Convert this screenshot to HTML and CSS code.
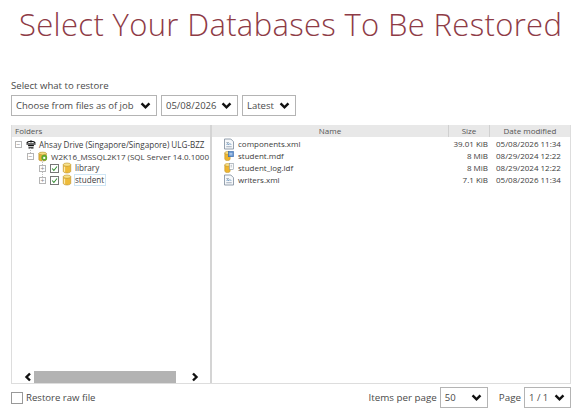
FILE: index.html
```html
<!DOCTYPE html>
<html lang="en">
<head>
  <meta charset="UTF-8" />
  <meta name="viewport" content="width=device-width, initial-scale=1" />
  <title>Select Your Databases To Be Restored</title>
  <link rel="stylesheet" href="styles.css">
</head>
<body>
  <svg class="defs" width="0" height="0">
    <defs>
      <symbol id="chev" viewBox="0 0 12 8"><path d="M1.500 1.500 6 6l4.500-4.500" fill="none" stroke="#111" stroke-width="2.800"/></symbol>
      <symbol id="db" viewBox="0 0 12 13">
        <path d="M1.500 2.500v8c0 1 2 2 4.500 2s4.500-1 4.500-2v-8z" fill="#eebb3a" stroke="#b98d22" stroke-width=".7"/>
        <ellipse cx="6" cy="2.500" rx="4.500" ry="2" fill="#f8e28c" stroke="#b98d22" stroke-width=".7"/>
        <path d="M3 5v6" stroke="#fbeab0" stroke-width="1.400"/>
      </symbol>
      <symbol id="xml" viewBox="0 0 11 12">
        <path d="M.5.500h7l3 3v8H.5z" fill="#f6f8fa" stroke="#8794a3"/>
        <path d="M2.500 4.500h3M2.500 9h6" stroke="#9aa7b4"/>
        <path d="M3 7l1-1.500L5 7l1.500-1.500L8 7" fill="none" stroke="#4c7fb0" stroke-width=".8"/>
      </symbol>
      <symbol id="dbfile" viewBox="0 0 13 13">
        <path d="M1 2.500v8c0 1 1.500 2 3.500 2s3.500-1 3.500-2v-8z" fill="#eeb52f" stroke="#b98d22" stroke-width=".7"/>
        <ellipse cx="4.500" cy="2.500" rx="3.500" ry="1.800" fill="#f8e28c" stroke="#b98d22" stroke-width=".7"/>
      </symbol>
    </defs>
  </svg>

  <h1 class="title">Select Your Databases To Be Restored</h1>

  <div class="label">Select what to restore</div>
  <div class="filters">
    <div class="dropdown job">Choose from files as of job <svg class="chev"><use href="#chev"/></svg></div>
    <div class="dropdown date">05/08/2026 <svg class="chev"><use href="#chev"/></svg></div>
    <div class="dropdown latest">Latest <svg class="chev"><use href="#chev"/></svg></div>
  </div>

  <div class="browser">
    <div class="tree-pane">
      <div class="head folders-head">Folders</div>
      <div class="tree">
        <div class="node">
          <span class="toggle">&minus;</span>
          <svg class="ico" viewBox="0 0 12 12"><path d="M1 5c1-3 9-3 10 0" fill="#fff" stroke="#111" stroke-width="1.300"/><path d="M.5 6h11" stroke="#111" stroke-width="1.500"/><path d="M2.500 8h7M3 10.500h6" stroke="#111" stroke-width="1.500"/><circle cx="6" cy="3" r="1.300" fill="#111"/></svg>
          <span>Ahsay Drive (Singapore/Singapore) ULG-BZZ</span>
        </div>
        <div class="node lvl1">
          <span class="toggle">&minus;</span>
          <svg class="ico" viewBox="0 0 12 12"><path d="M1 3v7.500c0 .8 2 1.500 4.500 1.500s4.500-.7 4.500-1.500V3z" fill="#e5b437" stroke="#a9821f" stroke-width=".6"/><ellipse cx="5.500" cy="3" rx="4.500" ry="1.700" fill="#f3dc80" stroke="#a9821f" stroke-width=".6"/><circle cx="7.500" cy="8" r="3.500" fill="#5fa82e"/><path d="M6.300 7v2.500h2.400V7z" fill="#fff"/></svg>
          <span class="instance">W2K16_MSSQL2K17 (SQL Server 14.0.1000</span>
        </div>
        <div class="node lvl2">
          <span class="toggle">+</span>
          <span class="check"><svg viewBox="0 0 9 9"><path d="M1.500 4.500 3.700 7l4-5" fill="none" stroke="#2e8b2e" stroke-width="1.300"/></svg></span>
          <svg class="ico"><use href="#db"/></svg>
          <span class="leaf">library</span>
        </div>
        <div class="node lvl2">
          <span class="toggle">+</span>
          <span class="check"><svg viewBox="0 0 9 9"><path d="M1.500 4.500 3.700 7l4-5" fill="none" stroke="#2e8b2e" stroke-width="1.300"/></svg></span>
          <svg class="ico"><use href="#db"/></svg>
          <span class="leaf selected">student</span>
        </div>
      </div>
      <div class="hscroll">
        <svg class="arrow" viewBox="0 0 8 10"><path d="M6 1.500 2.500 5 6 8.500" fill="none" stroke="#111" stroke-width="2.400"/></svg>
        <div class="thumb"></div>
        <svg class="arrow" viewBox="0 0 8 10"><path d="M2 1.500 5.500 5 2 8.500" fill="none" stroke="#111" stroke-width="2.400"/></svg>
      </div>
    </div>

    <div class="file-pane">
      <div class="file-row head">
        <span class="col-name centered">Name</span>
        <span class="col-size centered">Size</span>
        <span class="col-date centered">Date modified</span>
      </div>
      <div class="file-row">
        <span class="col-name"><svg class="file-ico"><use href="#xml"/></svg>components.xml</span>
        <span class="col-size">39.01 KiB</span>
        <span class="col-date">05/08/2026 11:34</span>
      </div>
      <div class="file-row">
        <span class="col-name"><svg class="file-ico" viewBox="0 0 13 13"><use href="#dbfile"/><rect x="5.500" y=".5" width="7" height="7" fill="#5c8fd0" stroke="#2f5f9f" stroke-width=".6"/><path d="M7 3h4M7 5h4" stroke="#fff" stroke-width=".8"/></svg>student.mdf</span>
        <span class="col-size">8 MiB</span>
        <span class="col-date">08/29/2024 12:22</span>
      </div>
      <div class="file-row">
        <span class="col-name"><svg class="file-ico" viewBox="0 0 13 13"><use href="#dbfile"/><rect x="7" y=".5" width="5" height="8" fill="#fff" stroke="#7a8794" stroke-width=".7"/><path d="M8.500 3h2M8.500 5h2" stroke="#7a8794" stroke-width=".7"/></svg>student_log.ldf</span>
        <span class="col-size">8 MiB</span>
        <span class="col-date">08/29/2024 12:22</span>
      </div>
      <div class="file-row">
        <span class="col-name"><svg class="file-ico"><use href="#xml"/></svg>writers.xml</span>
        <span class="col-size">7.1 KiB</span>
        <span class="col-date">05/08/2026 11:34</span>
      </div>
    </div>
  </div>

  <div class="footer">
    <label class="raw"><span class="box"></span>Restore raw file</label>
    <div class="pager">
      <span class="pager-label">Items per page</span>
      <div class="dropdown small per-page">50 <svg class="chev"><use href="#chev"/></svg></div>
      <span class="pager-label page-label">Page</span>
      <div class="dropdown small page">1 / 1 <svg class="chev"><use href="#chev"/></svg></div>
    </div>
  </div>
</body>
</html>
```

FILE: styles.css
```css
* {
  box-sizing: border-box;
}
body {
  font-family: 'Open Sans', sans-serif;
  background: #fff;
  margin: 0;
  padding: 0 9px 0 11px;
  color: #4a4a4a;
  overflow: hidden;
}
.defs {
  position: absolute;
}
.title {
  color: #8e3b46;
  font-size: 31px;
  font-weight: 300;
  letter-spacing: 0.34px;
  line-height: 44px;
  margin: 2px 0 0 8px;
  white-space: nowrap;
}
.label {
  font-size: 9.600px;
  line-height: 14px;
  margin-top: 33px;
}
.filters {
  display: flex;
  gap: 4px;
  margin-top: 2px;
}
.dropdown {
  display: flex;
  align-items: center;
  justify-content: space-between;
  height: 21px;
  padding: 0 5px 0 4px;
  border: 1px solid #b4b4b4;
  background: #fff;
  font-size: 9.500px;
  white-space: nowrap;
}
.chev {
  width: 11px;
  height: 7px;
  flex: none;
}
.job { width: 146px; }
.date { width: 77px; }
.latest { width: 54px; }

.browser {
  display: flex;
  height: 259px;
  margin-top: 9px;
  border: 1px solid #ddd;
  border-top: 0;
  font-size: 8px;
  color: #3c3c3c;
}
.head {
  height: 12px;
  line-height: 12px;
  background: #e8e8e8;
  color: #555;
}
.tree-pane {
  display: flex;
  flex-direction: column;
  width: 202px;
  border-right: 2px solid #d4d4d4;
  overflow: hidden;
}
.folders-head {
  padding-left: 3px;
}
.tree {
  flex: 1;
  padding: 1px 0 0 3px;
  font-size: 8.100px;
}
.node {
  display: flex;
  align-items: center;
  gap: 3px;
  height: 12px;
  white-space: nowrap;
}
.lvl1 { padding-left: 12px; }
.lvl2 { padding-left: 24px; }
.instance {
  font-size: 8px;
}
.toggle {
  position: relative;
  display: flex;
  align-items: center;
  justify-content: center;
  width: 7px;
  height: 7px;
  flex: none;
  margin-right: 1px;
  border: 1px solid #b5b5b5;
  color: #888;
  font-size: 7px;
  line-height: 1;
}
/* dotted connector up to the parent row */
.lvl1 .toggle::before,
.lvl2 .toggle::before {
  content: "";
  position: absolute;
  left: 2px;
  top: -6px;
  height: 5px;
  border-left: 1px dotted #bbb;
}
.ico {
  width: 10px;
  height: 12px;
  flex: none;
}
.check {
  display: block;
  width: 9px;
  height: 9px;
  flex: none;
  border: 1px solid #777;
  background: #fff;
}
.check svg {
  display: block;
  width: 7px;
  height: 7px;
}
.leaf {
  margin-left: -1px;
  padding: 0 1px 0 0;
  border: 1px solid transparent;
  line-height: 10px;
}
.selected {
  border-color: #cfe6f5;
}
.hscroll {
  display: flex;
  align-items: center;
  height: 12px;
  padding-left: 12px;
}
.arrow {
  width: 8px;
  height: 10px;
  flex: none;
}
.thumb {
  width: 142px;
  height: 12px;
  margin: 0 15px 0 2px;
  background: #b3b3b3;
}
.file-pane {
  flex: 1;
}
.file-row {
  display: grid;
  grid-template-columns: 237px 41px 80px;
  height: 12px;
  line-height: 12px;
  white-space: nowrap;
}
.file-row.head {
  margin-bottom: 1px;
}
.file-row.head span {
  border-right: 1px solid #d0d0d0;
}
.file-row.head span:last-child {
  border-right: 0;
}
.col-name {
  display: flex;
  align-items: center;
  padding-left: 12px;
}
.file-ico {
  width: 10px;
  height: 12px;
  flex: none;
  margin-right: 4px;
}
.col-size {
  padding-right: 2px;
  text-align: right;
}
.col-date {
  padding-left: 6px;
}
.file-row .centered {
  display: block;
  padding: 0;
  text-align: center;
}
.footer {
  display: flex;
  justify-content: space-between;
  align-items: center;
  margin-top: 3px;
}
.raw {
  display: flex;
  align-items: center;
  gap: 3px;
  font-size: 9.600px;
}
.box {
  width: 12px;
  height: 12px;
  border: 1px solid #999;
}
.pager {
  display: flex;
  align-items: center;
  font-size: 9.800px;
}
.small {
  height: 21px;
}
.per-page {
  width: 48px;
  margin-left: 3px;
}
.page-label {
  margin-left: 11px;
}
.page {
  width: 47px;
  margin-left: 3px;
}
```
